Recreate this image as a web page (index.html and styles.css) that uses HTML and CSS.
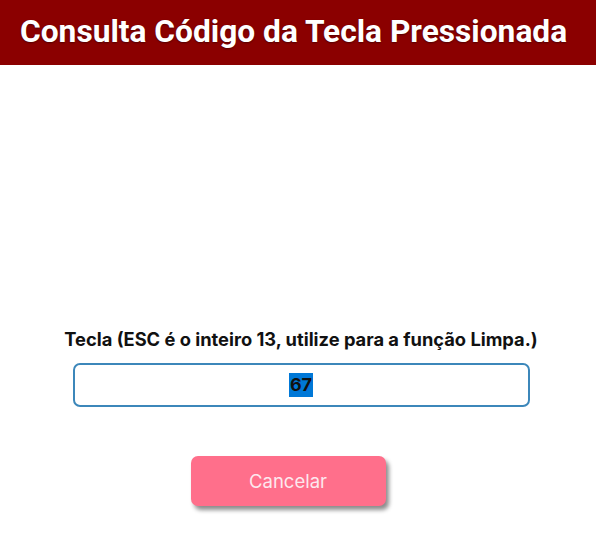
FILE: index.html
```html
<!DOCTYPE html>
<html lang="pt">
<head>
<meta charset="utf-8">
<link rel="stylesheet" href="styles.css">
</head>
<body>
<header class="topbar">
  <h1 class="title">Consulta Código da Tecla Pressionada</h1>
</header>
<main class="content">
  <label class="label">Tecla (ESC é o inteiro 13, utilize para a função Limpa.)</label>
  <div class="field"><span class="sel">67</span></div>
  <button class="btn">Cancelar</button>
</main>
</body>
</html>
```
FILE: styles.css
```css
html, body {
  margin: 0;
  padding: 0;
  background: #ffffff;
}
body {
  width: 596px;
  height: 539px;
  overflow: hidden;
  font-family: Inter, "Noto Sans", sans-serif;
}
.topbar {
  background: #8b0000;
  height: 65px;
  display: flex;
  align-items: center;
  padding-left: 20px;
  padding-bottom: 3px;
  box-sizing: border-box;
}
.title {
  margin: 0;
  font-family: Roboto, "Liberation Sans", sans-serif;
  font-weight: 700;
  font-size: 31.7px;
  color: #ffffff;
  text-shadow: 0 1px 2px rgba(0,0,0,0.4);
  white-space: nowrap;
}
.content {
  display: flex;
  flex-direction: column;
  align-items: center;
  padding-top: 262px;
  padding-left: 6px;
}
.label {
  font-weight: 700;
  font-size: 18.3px;
  color: #111111;
  line-height: 24px;
  white-space: nowrap;
}
.field {
  margin-top: 12px;
  width: 457px;
  height: 44px;
  box-sizing: border-box;
  border: 2px solid #3c87ba;
  border-radius: 7px;
  display: flex;
  align-items: center;
  justify-content: center;
}
.sel {
  background: #0078d7;
  color: #111111;
  font-weight: 700;
  font-size: 18px;
  line-height: 24px;
  padding: 0 1px;
}
.btn {
  margin-top: 49px;
  margin-right: 26px;
  width: 195px;
  height: 50px;
  border: none;
  border-radius: 7px;
  background: #ff6f8b;
  color: #fde8ee;
  font-family: Inter, "Noto Sans", sans-serif;
  font-size: 18.5px;
  box-shadow: 3px 4px 4px rgba(0,0,0,0.45);
}
```
